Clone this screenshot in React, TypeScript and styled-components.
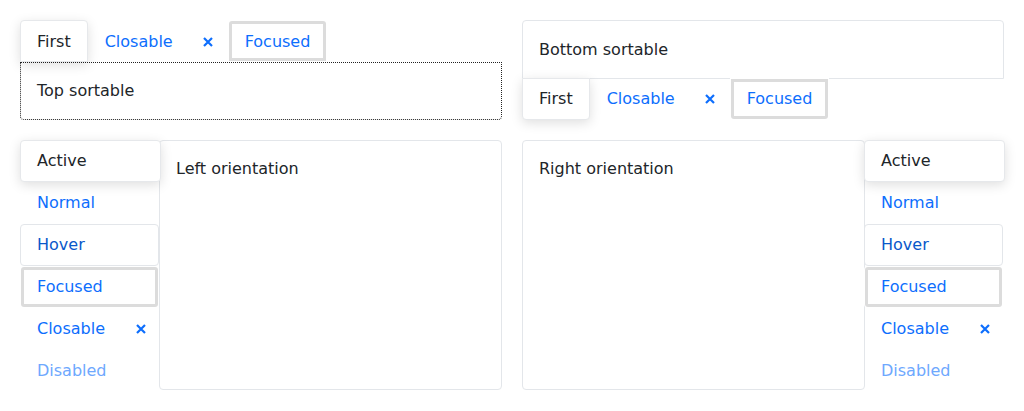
import React from 'react';
import styled, { createGlobalStyle, css } from 'styled-components';

type Side = 'top' | 'bottom' | 'left' | 'right';
type TabKind = 'active' | 'normal' | 'hover' | 'focused' | 'disabled';

interface TabDef {
    label: string;
    kind: TabKind;
    closable?: boolean;
}

const horizontalTabs: TabDef[] = [
    { label: 'First', kind: 'active' },
    { label: 'Closable', kind: 'normal', closable: true },
    { label: 'Focused', kind: 'focused' },
];

const verticalTabs: TabDef[] = [
    { label: 'Active', kind: 'active' },
    { label: 'Normal', kind: 'normal' },
    { label: 'Hover', kind: 'hover' },
    { label: 'Focused', kind: 'focused' },
    { label: 'Closable', kind: 'normal', closable: true },
    { label: 'Disabled', kind: 'disabled' },
];

const radiusFor = (side: Side) => {
    switch (side) {
        case 'top': return '4px 4px 0 0';
        case 'bottom': return '0 0 4px 4px';
        default: return '4px';
    }
};

const CloseIcon = () => (
    <svg width="10" height="10" viewBox="0 0 10 10">
        <path d="M1 1 L9 9 M9 1 L1 9" stroke="#0d6efd" strokeWidth="2.2" strokeLinecap="butt" />
    </svg>
);

function TabBox({ side, tabs, title, dotted }: { side: Side; tabs: TabDef[]; title: string; dotted?: boolean }) {
    const vertical = side === 'left' || side === 'right';
    return (
        <Box $side={side}>
            <TabList $side={side}>
                {tabs.map((t) => (
                    <Tab key={t.label} $kind={t.kind} $side={side} $vertical={vertical}>
                        <span>{t.label}</span>
                        {t.closable && (
                            <Close $vertical={vertical}>
                                <CloseIcon />
                            </Close>
                        )}
                    </Tab>
                ))}
            </TabList>
            <Panel $side={side} $dotted={dotted}>{title}</Panel>
        </Box>
    );
}

export default function App() {
    return (
        <>
            <GlobalStyle />
            <Page>
                <TabBox side="top" tabs={horizontalTabs} title="Top sortable" dotted />
                <TabBox side="bottom" tabs={horizontalTabs} title="Bottom sortable" />
                <TabBox side="left" tabs={verticalTabs} title="Left orientation" />
                <TabBox side="right" tabs={verticalTabs} title="Right orientation" />
            </Page>
        </>
    );
}

const GlobalStyle = createGlobalStyle`
    body {
        margin: 0;
        background: #fff;
        font-family: "DejaVu Sans", "Liberation Sans", sans-serif;
        font-size: 16px;
        line-height: 24px;
        color: #212529;
    }
`;

const Page = styled.div`
    padding: 20px;
    display: grid;
    grid-template-columns: 1fr 1fr;
    grid-template-rows: 100px 252px;
    column-gap: 20px;
    row-gap: 20px;
`;

const Box = styled.div<{ $side: Side }>`
    display: flex;
    align-items: stretch;
    flex-direction: ${(p) =>
        p.$side === 'top' ? 'column'
        : p.$side === 'bottom' ? 'column-reverse'
        : p.$side === 'left' ? 'row'
        : 'row-reverse'};
    ${(p) => (p.$side === 'left' || p.$side === 'right') && css`align-items: flex-start;`}
`;

const TabList = styled.div<{ $side: Side }>`
    display: flex;
    position: relative;
    z-index: 1;
    flex-direction: ${(p) => (p.$side === 'left' || p.$side === 'right' ? 'column' : 'row')};
    ${(p) => (p.$side === 'left' || p.$side === 'right') && css`width: 140px; flex-shrink: 0;`}
    ${(p) => p.$side === 'bottom' && css`margin-top: -1px;`}
    ${(p) => p.$side === 'left' && css`margin-right: -1px;`}
    ${(p) => p.$side === 'right' && css`margin-left: -1px;`}
`;

const Tab = styled.div<{ $kind: TabKind; $side: Side; $vertical: boolean }>`
    display: flex;
    align-items: center;
    height: 42px;
    box-sizing: border-box;
    padding: ${(p) => (p.$side === 'top' ? '9px 16px 7px' : '8px 16px')};
    border: 1px solid transparent;
    border-radius: ${(p) => radiusFor(p.$side)};
    color: #0d6efd;
    white-space: nowrap;
    ${(p) => p.$vertical && css`width: 141px;`}

    ${(p) => p.$kind === 'active' && css`
        color: #212529;
        background: #fff;
        border-color: #e6e8eb;
        box-shadow: 0 3px 12px rgba(0, 0, 0, 0.13);
    `}
    ${(p) => p.$kind === 'hover' && css`
        color: #0a58ca;
        border-color: #e3e6ea;
        width: 139px;
    `}
    ${(p) => p.$kind === 'focused' && css`
        background: #fff;
        box-shadow: inset 0 0 0 3px #dcdcdc;
        ${p.$vertical && css`width: 139px;`}
    `}
    ${(p) => p.$kind === 'disabled' && css`
        color: #6ea8fe;
    `}
`;

const Close = styled.span<{ $vertical: boolean }>`
    display: flex;
    align-items: center;
    margin-left: ${(p) => (p.$vertical ? 'auto' : '30px')};
    margin-right: -2px;
`;

const Panel = styled.div<{ $side: Side; $dotted?: boolean }>`
    flex: 1;
    box-sizing: border-box;
    padding: 16px;
    border: 1px solid #e3e6ea;
    border-radius: ${(p) =>
        p.$side === 'top' ? '0 0 4px 4px'
        : p.$side === 'bottom' ? '4px 4px 0 0'
        : '4px'};
    ${(p) => p.$side === 'bottom' && css`padding: 17px 16px 15px;`}
    ${(p) => p.$dotted && css`
        border: 1px dotted #222;
        padding: 16px 16px 14px;
    `}
    ${(p) => (p.$side === 'left' || p.$side === 'right') && css`
        height: 250px;
    `}
`;
